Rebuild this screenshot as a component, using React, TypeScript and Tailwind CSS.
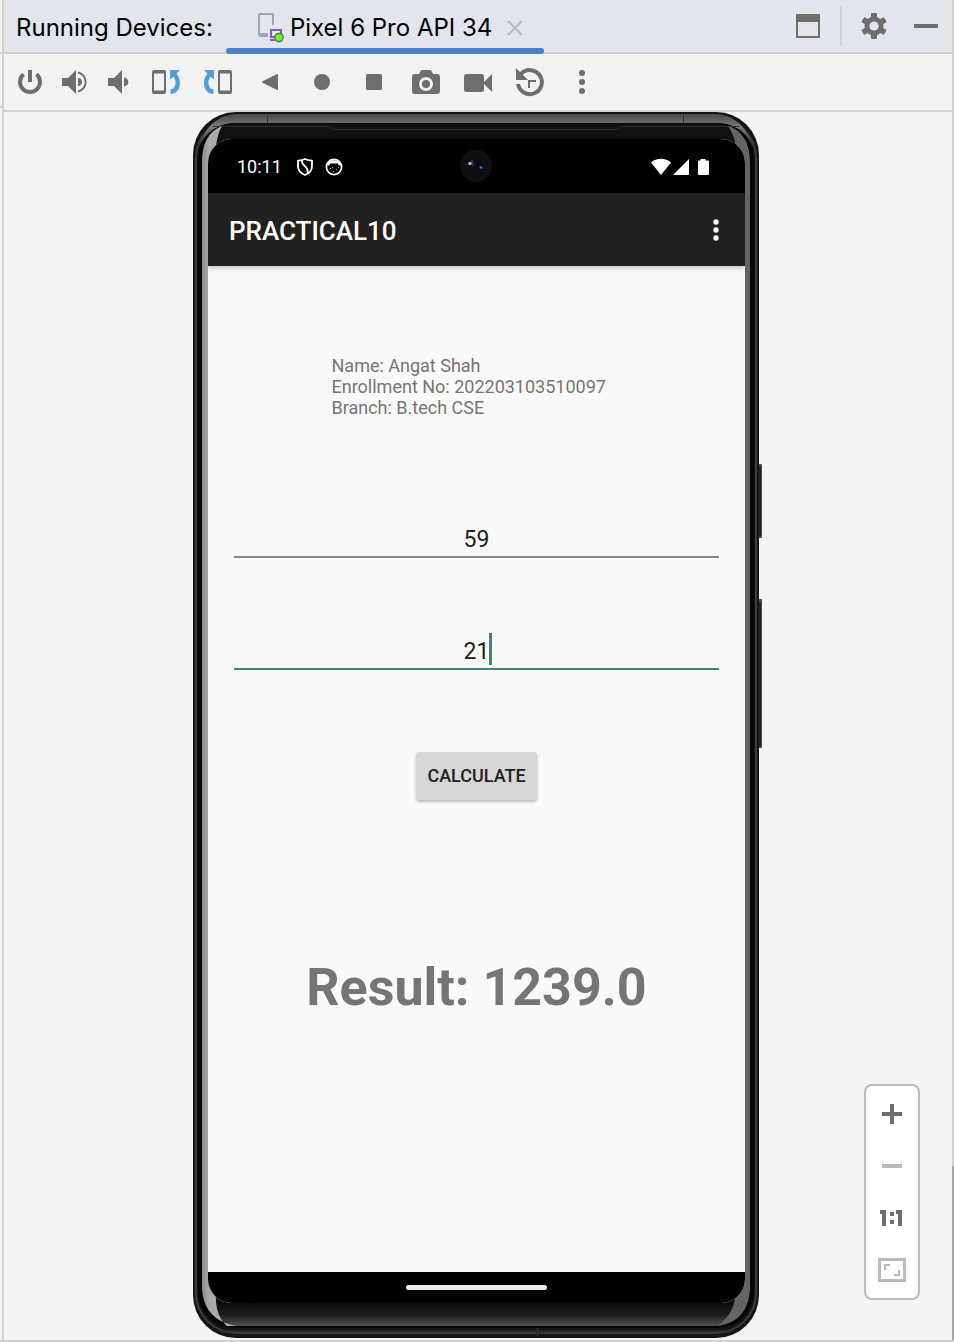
import type { ReactNode } from "react";

const GREY = "#6e6e6e";
const BLUE = "#549ed6";

type Tool = { label: string; wide?: boolean; art: ReactNode };

const tools: Tool[] = [
  {
    label: "Power",
    art: (
      <>
        <path d="M15.6 20.3A10 10 0 1 0 28.4 20.3" fill="none" stroke={GREY} strokeWidth="4" />
        <path d="M20 16h4v12h-4z" />
      </>
    ),
  },
  {
    label: "Volume up",
    art: (
      <>
        <path d="M10 24h6l8-8v24l-8-8h-6z" />
        <path d="M26 24a4 4 0 0 1 0 8z" />
        <path d="M26 18.6a9.6 9.6 0 0 1 0 18.8" fill="none" stroke={GREY} strokeWidth="2" />
      </>
    ),
  },
  {
    label: "Volume down",
    art: (
      <>
        <path d="M12 24h6l8-8v24l-8-8h-6z" />
        <path d="M28 23.6a4.4 4.4 0 0 1 0 8.8z" />
      </>
    ),
  },
  {
    label: "Rotate left",
    wide: true,
    art: (
      <>
        <path fillRule="evenodd" d="M14 16h10a2 2 0 0 1 2 2v20a2 2 0 0 1-2 2H14a2 2 0 0 1-2-2V18a2 2 0 0 1 2-2zM14 19.5v17h10v-17z" />
        <path d="M30 16h10l-3.4 3.4C42 26 41.5 39 30.5 40v-4.5c5.500-1 6.500-8.500 3-12.800L30 25.500z" fill={BLUE} />
      </>
    ),
  },
  {
    label: "Rotate right",
    wide: true,
    art: (
      <>
        <path fillRule="evenodd" d="M28 16h10a2 2 0 0 1 2 2v20a2 2 0 0 1-2 2H28a2 2 0 0 1-2-2V18a2 2 0 0 1 2-2zM28 19.5v17h10v-17z" />
        <path d="M22 16H12l3.4 3.4C10 26 10.5 39 21.5 40v-4.5c-5.500-1-6.500-8.500-3-12.800L22 25.500z" fill={BLUE} />
      </>
    ),
  },
  { label: "Back", wide: true, art: <path d="M33 20q1-.4 1 .8v14.400q0 1.200-1 .8l-14.400-7.300q-1.200-.7 0-1.400z" /> },
  { label: "Home", wide: true, art: <circle cx="26" cy="28" r="8" /> },
  { label: "Overview", wide: true, art: <rect x="18" y="20" width="16" height="16" rx="1.5" /> },
  {
    label: "Take screenshot",
    wide: true,
    art: (
      <>
        <path d="M15 20h4l1.500-3q.5-1 1.500-1h8q1 0 1.500 1l1.500 3h4a3 3 0 0 1 3 3v14a3 3 0 0 1-3 3H15a3 3 0 0 1-3-3V23a3 3 0 0 1 3-3z" />
        <circle cx="26" cy="30" r="5.500" fill="none" stroke="#f2f2f2" strokeWidth="3" />
      </>
    ),
  },
  {
    label: "Record screen",
    wide: true,
    art: (
      <>
        <rect x="12" y="20" width="20" height="18" rx="2.500" />
        <path d="M31 29l9-9v18z" />
      </>
    ),
  },
  {
    label: "Snapshots",
    wide: true,
    art: (
      <>
        <path d="M14 30a12 12 0 1 0 3-10" fill="none" stroke={GREY} strokeWidth="4" />
        <path d="M12 14l12 12H12z" />
        <path d="M24 26h8v2h-6v6h-2z" />
      </>
    ),
  },
  {
    label: "More",
    wide: true,
    art: (
      <>
        <circle cx="26" cy="19" r="3" />
        <circle cx="26" cy="28" r="3" />
        <circle cx="26" cy="37" r="3" />
      </>
    ),
  },
];

function Header() {
  return (
    <header className="flex h-[54px] shrink-0 items-stretch border-b-2 border-[#d1d1d1] bg-[#e2e6ec]">
      <h1 className="pl-3 text-2xl leading-[56px]">Running Devices:</h1>
      <div className="relative ml-[13px] flex h-[54px] w-[318px] items-center pl-[30px] pt-[2px]">
        <svg width="28" height="32" viewBox="0 0 28 32" className="shrink-0" aria-hidden="true">
          <path
            d="M4 3h12v10h2V3a2 2 0 0 0-2-2H4a2 2 0 0 0-2 2v20a2 2 0 0 0 2 2h8v-4H4z"
            fill="#9aa7b0"
          />
          <path d="M15 18h10v7H15z" fill="none" stroke="#7f5fb0" strokeWidth="2" />
          <path d="M14 27h5v2h-5z" fill="#7f5fb0" />
          <circle cx="23" cy="25.500" r="4.200" fill="#62f531" stroke="#4c7048" strokeWidth="1.200" />
        </svg>
        <span className="ml-[6px] whitespace-nowrap text-2xl">Pixel 6 Pro API 34</span>
        <button type="button" aria-label="Close tab" className="ml-[14px]">
          <svg width="18" height="18" viewBox="0 0 18 18" aria-hidden="true">
            <path d="M2 2l14 14M16 2L2 16" stroke="#b8bbbf" strokeWidth="2" />
          </svg>
        </button>
        <span className="absolute inset-x-0 bottom-0 h-[6px] rounded-full bg-[#4a80c4]" />
      </div>
      <div className="ml-auto flex h-[52px] items-center pr-[14px]">
        <button type="button" aria-label="Window mode">
          <svg width="24" height="24" viewBox="0 0 24 24" aria-hidden="true">
            <path fillRule="evenodd" fill={GREY} d="M0 0h24v24H0zM2 8v14h20V8z" />
          </svg>
        </button>
        <span className="ml-5 h-10 w-[2px] bg-[#d1d1d1]" />
        <button type="button" aria-label="Settings" className="ml-[19px]">
          <svg width="26" height="26" viewBox="-13 -13 26 26" aria-hidden="true">
            <g fill={GREY}>
              {[0, 60, 120].map((a) => (
                <rect key={a} x="-3" y="-13" width="6" height="26" rx="1" transform={`rotate(${a})`} />
              ))}
              <circle r="9.500" />
            </g>
            <circle r="4.600" fill="#e2e6ec" />
          </svg>
        </button>
        <button type="button" aria-label="Hide" className="ml-[27px]">
          <svg width="24" height="24" viewBox="0 0 24 24" aria-hidden="true">
            <path d="M0 10h24v4H0z" fill={GREY} />
          </svg>
        </button>
      </div>
    </header>
  );
}

function Toolbar() {
  return (
    <div role="toolbar" aria-label="Device controls" className="flex h-[58px] shrink-0 border-b-2 border-[#d1d1d1] bg-[#f2f2f2] pl-1">
      {tools.map((t) => (
        <button key={t.label} type="button" aria-label={t.label} className={t.wide ? "w-[52px]" : "w-11"}>
          <svg
            width={t.wide ? 52 : 44}
            height="56"
            viewBox={t.wide ? "0 0 52 56" : "0 0 44 56"}
            fill={GREY}
            aria-hidden="true"
          >
            {t.art}
          </svg>
        </button>
      ))}
    </div>
  );
}

function PhoneFrame() {
  return (
    <svg
      className="absolute left-0 top-0 h-full w-[570px]"
      viewBox="0 0 570 1226"
      preserveAspectRatio="none"
      aria-hidden="true"
    >
      <defs>
        <linearGradient id="rimTop" x1="0" y1="0" x2="0" y2="1">
          <stop offset="0" stopColor="#484848" />
          <stop offset="0.4" stopColor="#7a7a7a" />
          <stop offset="1" stopColor="#3a3a3a" />
        </linearGradient>
        <linearGradient id="chin" x1="0" y1="0" x2="0" y2="1">
          <stop offset="0" stopColor="#0b0b0b" />
          <stop offset="0.5" stopColor="#1c1c1c" />
          <stop offset="1" stopColor="#505050" />
        </linearGradient>
        <linearGradient id="chinBox" gradientUnits="userSpaceOnUse" x1="0" y1="1191" x2="0" y2="1214">
          <stop offset="0" stopColor="#0d0d0d" />
          <stop offset="0.5" stopColor="#1c1c1c" />
          <stop offset="1" stopColor="#505050" />
        </linearGradient>
        <linearGradient id="silver" x1="0" y1="0" x2="1" y2="0">
          <stop offset="0" stopColor="#8c8c8c" />
          <stop offset="0.2" stopColor="#a9a9a9" />
          <stop offset="1" stopColor="#b4b4b4" />
        </linearGradient>
      </defs>
      <rect x="563" y="352" width="6" height="74" rx="1" fill="#4a4a4a" />
      <rect x="563" y="487" width="6" height="149" rx="1" fill="#4a4a4a" />
      <path d="M567 354v70M567 490v144" stroke="#222" strokeWidth="2" />
      <rect x="0" y="0" width="566" height="1226" rx="43" fill="#141414" />
      <rect x="3" y="6" width="560" height="1215" rx="40" fill="none" stroke="#3c3c3c" strokeWidth="2" />
      <path d="M6 34C13 12 28 2 45 2H521C538 2 553 12 560 34C552 17 538 11 521 11H45C30 11 14 17 6 34z" fill="url(#rimTop)" />
      <rect x="5" y="11" width="556" height="1205" rx="36" fill="#050505" />
      <path d="M42 12H524C542 12 552 24 552 48V100H14V48C14 24 24 12 42 12z" fill="#111" />
      <path d="M15 1180H551C548 1202 536 1214 522 1214H44C30 1214 18 1202 15 1180z" fill="url(#chinBox)" />
      <path d="M20 14.500H136l5 3H424l5-3H546" fill="none" stroke="#303030" />
      <path d="M74.500 3v8M490.500 3v8" stroke="#333" />
      <path
        d="M29 14C16 19 9 31 9 50V1176C10 1196 20 1210 44 1214H34C26 1207 22 1196 23 1180V34C24 26 26 19 29 14z"
        fill="url(#silver)"
      />
      <path
        d="M535 14C549 18 557 31 557 50V1176C556 1198 546 1211 524 1214C536 1206 542 1196 543 1178V36C542 27 539 20 535 14z"
        fill="#646464"
      />
      <path d="M28 1219.500H538M344.500 1216v8" fill="none" stroke="#2e2e2e" strokeWidth="2" />
    </svg>
  );
}

function StatusBar() {
  return (
    <div className="flex h-[54px] shrink-0 items-center bg-black pl-[29px] pr-[36px] pt-[2px] text-white">
      <span className="text-lg">10:11</span>
      <svg className="ml-[14px]" width="18" height="20" viewBox="0 0 18 20" fill="none" stroke="#fff" strokeWidth="1.800" aria-hidden="true">
        <path d="M9 2C6.500 3.200 4 3.500 2 3.800V9c0 4 3 7.500 7 9 4-1.500 7-5 7-9V3.800C14 3.500 11.500 3.200 9 2z" />
        <path d="M6 3C5 10 13 8 11.500 16" />
      </svg>
      <svg className="ml-[10px]" width="20" height="20" viewBox="0 0 20 20" aria-hidden="true">
        <circle cx="10" cy="10" r="7.600" fill="none" stroke="#fff" strokeWidth="1.700" />
        <path d="M3 7C5 2 15 2 17 7l-2 2-1-2.500H6L5 9z" fill="#fff" />
        <path d="M6 11h1v1H6zM12 12h1v1h-1zM9 14h1v1H9zM14 10h1v1h-1zM8 10h1v1H8z" fill="#aaa" />
      </svg>
      <svg className="ml-auto" width="58" height="18" viewBox="0 0 58 18" fill="#fff" aria-hidden="true">
        <path d="M0 4.500C5.500-.5 14.500-.5 20 4.500L10 17z" />
        <path d="M38 1v16H22z" />
        <path d="M49.500 1h5v1.500H57q1 0 1 1v12.500q0 1-1 1h-9q-1 0-1-1V3.500q0-1 1-1h1.500z" />
      </svg>
    </div>
  );
}

function Phone() {
  return (
    <div className="relative w-[566px] shrink-0 pb-[35px] pl-[15px] pr-[14px] pt-[27px] font-[Roboto,sans-serif]">
      <PhoneFrame />
      <div className="relative flex flex-col overflow-hidden rounded-[24px] bg-[#fafafa]">
        <StatusBar />
        <svg className="absolute left-1/2 top-[11px] -ml-[17px]" width="32" height="32" viewBox="0 0 32 32" aria-hidden="true">
          <circle cx="16" cy="16" r="16" fill="#101010" />
          <circle cx="16" cy="16" r="7" fill="#0c0d18" />
          <path d="M12 10q0 4 2 6" stroke="#24346a" strokeWidth="2" fill="none" />
          <circle cx="10" cy="13.500" r="1.800" fill="#b0b0aa" />
          <ellipse cx="21" cy="17.500" rx="1.500" ry="1.200" fill="#2b78b8" />
        </svg>
        <div className="relative flex h-[73px] shrink-0 items-center justify-between bg-[#212121] pl-[21px] pr-[20px] text-white shadow-[0_1px_6px_rgba(0,0,0,0.3)]">
          <h2 className="pt-[3px] text-[26px] font-medium">PRACTICAL10</h2>
          <button type="button" aria-label="More options">
            <svg width="18" height="24" viewBox="0 0 18 24" fill="#fff" aria-hidden="true">
              <circle cx="9" cy="4" r="2.700" />
              <circle cx="9" cy="12" r="2.700" />
              <circle cx="9" cy="20" r="2.700" />
            </svg>
          </button>
        </div>
        <main className="flex h-[1006px] flex-col items-center px-[26px] pt-[89px]">
          <p className="w-[290px] whitespace-pre text-lg leading-[21px] text-[#757575]">
            {"Name: Angat Shah\nEnrollment No: 202203103510097\nBranch: B.tech CSE"}
          </p>
          <input
            aria-label="First number"
            defaultValue="59"
            className="mt-[100px] h-10 w-full border-b-2 border-[#858585] bg-transparent pt-1 text-center text-[23px] text-[#212121] outline-none"
          />
          <div className="relative mt-[72px] w-full">
            <input
              aria-label="Second number"
              defaultValue="21"
              className="block h-10 w-full border-b-2 border-[#3b8878] bg-transparent pt-1 text-center text-[23px] text-[#212121] caret-[#3b8878] outline-none"
            />
            <span className="absolute left-1/2 top-[3px] ml-3 h-8 w-[3px] bg-[#3b8878]" />
          </div>
          <button
            type="button"
            className="mt-[82px] h-12 w-[121px] rounded-[3px] bg-[#d6d7d7] text-lg font-medium text-[#212121] shadow-[0_2px_3px_rgba(0,0,0,0.25)]"
          >
            CALCULATE
          </button>
          <p className="mt-[156px] text-[52px] font-bold leading-[64px] text-[#757575]">Result: 1239.0</p>
        </main>
        <div className="flex h-[31px] shrink-0 items-center justify-center bg-black">
          <span className="h-[5px] w-[141px] rounded-full bg-[#ececec]" />
        </div>
      </div>
    </div>
  );
}

const zooms: Tool[] = [
  { label: "Zoom in", art: <path d="M24 16h4v8h8v4h-8v8h-4v-8h-8v-4h8z" fill={GREY} /> },
  { label: "Zoom out", art: <path d="M16 24h20v4H16z" fill="#bababa" /> },
  {
    label: "Actual size",
    art: <path d="M14 18h6v16h-4V22h-2zM30 18h6v16h-4V22h-2zM24 20h4v4h-4zM24 28h4v4h-4z" fill={GREY} />,
  },
  {
    label: "Fit to window",
    art: (
      <path
        fillRule="evenodd"
        d="M12 14h28v24H12zM15 17v18h22V17zM18 20h6v2h-4v4h-2zM34 26v6h-6v-2h4v-4z"
        fill="#bababa"
      />
    ),
  },
];

function ZoomPanel() {
  return (
    <div className="absolute bottom-10 right-8 flex w-14 flex-col items-center rounded-lg border-2 border-[#bdbdbd] bg-white py-[2px]">
      {zooms.map((z) => (
        <button key={z.label} type="button" aria-label={z.label} className="h-[52px]">
          <svg width="52" height="52" viewBox="0 0 52 52" aria-hidden="true">
            {z.art}
          </svg>
        </button>
      ))}
    </div>
  );
}

export default function App() {
  return (
    <div className="flex min-h-screen border-b-2 border-[#d1d1d1] bg-[#f4f4f4] font-[Inter,sans-serif] text-black">
      <div className="flex w-1 shrink-0 flex-col border-r-2 border-[#d1d1d1]">
        <span className="h-[54px] border-b-2 border-[#d1d1d1]" />
        <span className="h-[54px] border-b-2 border-[#d1d1d1]" />
      </div>
      <div className="flex min-w-0 flex-1 flex-col">
        <Header />
        <Toolbar />
        <div className="relative flex flex-1 items-start justify-center pb-[2px] pr-1">
          <Phone />
          <ZoomPanel />
        </div>
      </div>
      <div className="flex w-[2px] shrink-0 flex-col justify-end bg-[#d1d1d1]">
        <span className="h-[174px] bg-[#a6a6a6]" />
      </div>
    </div>
  );
}
